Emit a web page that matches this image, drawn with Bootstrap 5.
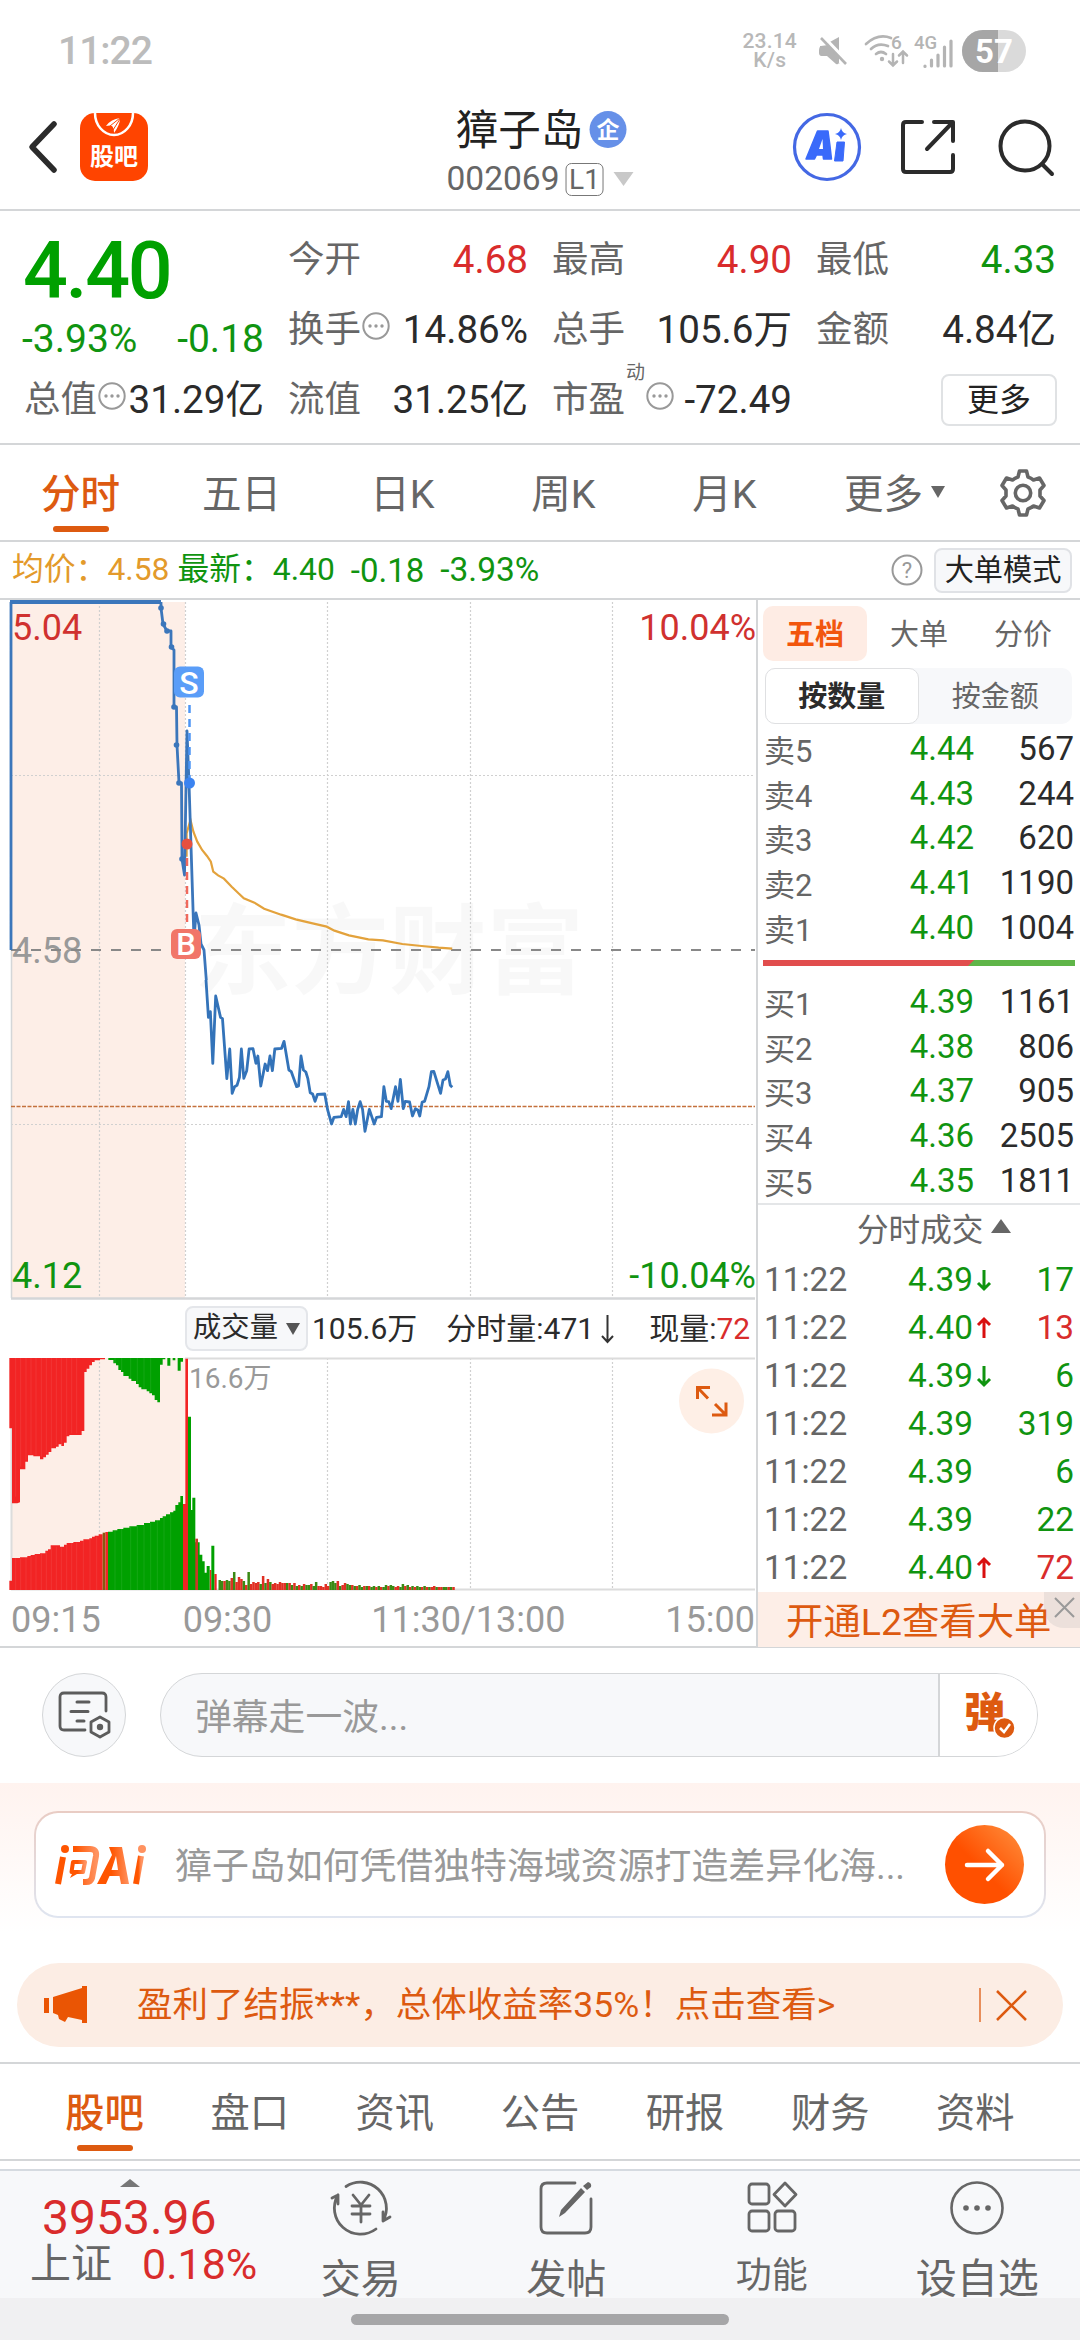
<!DOCTYPE html>
<html lang="zh-CN">
<head>
<meta charset="utf-8">
<meta name="viewport" content="width=device-width, initial-scale=1">
<title>獐子岛 002069</title>
<link href="https://cdn.jsdelivr.net/npm/bootstrap@5.3.0/dist/css/bootstrap.min.css" rel="stylesheet">
<style>
:root{--up:#d92c2c;--down:#109410;--tx:#2b2b2b;--sub:#666;--mute:#999;--org:#dd5a10;--line:#d4d6d8}
body{width:1080px;height:2340px;overflow:hidden;background:#fff;color:var(--tx);font-family:Roboto,"Noto Sans CJK SC",sans-serif;line-height:1;white-space:nowrap}
svg{display:block;flex:none;overflow:visible}
.c-up{color:var(--up)}.c-down{color:var(--down)}.c-sub{color:var(--sub)}.c-org{color:var(--org)}
.hair{border-bottom:2px solid var(--line)}
.statusbar{height:102px;padding:0 54px 0 58px;color:#bcbcbc}
.clock{font-size:39px;font-weight:500;letter-spacing:-1px}
.rate{font-size:21px;line-height:19px;font-weight:500;color:#b8b8b8;letter-spacing:.2px}
.topnav{height:109px;padding:0 25px 0 28px}
.appico{width:68px;height:68px;border-radius:15px;background:#ff4400;margin-left:22px;overflow:hidden}
.stock{font-size:42.5px;line-height:50px;color:#222}
.code{font-size:33.5px;color:var(--sub);line-height:40px}
.lv{border:1.5px solid #777;border-radius:6px;width:38px;height:33px;font-size:28px;line-height:31px;margin:0 10px 0 6px}
.quote{height:234px;padding:14px 24px 0 24px}
.q-main{width:240px}
.q-price{font-size:79px;font-weight:500;color:#00a000;height:92px;padding-top:7px;letter-spacing:-2.3px;margin-left:-1px}
.q-chg{font-size:39px;padding-top:3px;margin-left:-2px}
.q-cells{width:768px;column-gap:24px}
.q-cell{width:240px;height:70px;font-size:36.5px}
.q-cell b{font-weight:400;font-size:38.6px}
.q-dot{margin-left:1px}
.btn-more{width:116px;height:52px;border:2px solid #e0e2e4;border-radius:8px;font-size:32px;line-height:1;color:#222;padding:0;margin-right:-1px}
.ktabs{height:97px;font-size:39.5px;color:var(--sub)}
.ktabs>div{width:161px;height:95px;padding-top:5px}
.tabline{width:56px;height:6px;border-radius:3px;background:var(--org);bottom:8px;left:50%;margin-left:-28px}
.infobar{height:58px;padding:0 8px 0 12px;font-size:31.8px}
.btn-mode{width:138px;height:45px;border:2px solid #e0e2e6;background:#f7f8fa;border-radius:8px;font-size:29.2px;line-height:1;padding:2px 0 0;color:#222}
.mainrow{height:1048px}
.chartcol{width:758px;border-right:2px solid var(--line)}
.volhead{height:57px;padding-left:185px;font-size:30px}
.volsel{width:123px;height:45px;border:2px solid #e4e6ea;background:#f7f8fa;border-radius:8px;font-size:28.3px;margin-right:4px}
.axis{height:55px;font-size:36px;color:var(--mute);padding:3px 1px 0 11px}
.bookcol{width:322px}
.booktabs{height:55px;margin:6px 0 0 5px;font-size:29px;color:var(--sub)}
.booktabs>div{width:104px;border-radius:10px;padding-top:3px}
.booktabs .on{background:#feece4;color:#f2560d;font-weight:700}
.seg{margin:7px 8px 0 7px;height:56px;background:#f7f8fa;border-radius:10px;font-size:29px;color:var(--sub)}
.seg>div{width:154px;border-radius:10px;padding-top:3px}
.seg .on{background:#fff;border:1.5px solid #dfe0e2;color:#2b2b2b;font-weight:700}
.lvl{height:44.8px;padding:0 6px 0 6px;font-size:33px}
.lvl .nm{width:111px;font-size:31px;color:var(--sub);padding-top:6px}
.lvl .pr{width:99px;text-align:right}
.lvl .vo{width:100px;text-align:right}
.bsbar{height:6px;margin:10px 5px 13px 5px;background:linear-gradient(135deg,#e14d4d 0 149px,#5fb548 149.500px)}
.dealhead{height:53px;border-top:2px solid #e4e6e8;font-size:31.6px;color:var(--sub);padding-left:99px}
.deal{height:48px;padding:0 6px;font-size:33.4px}
.deal .tm{width:110px;color:var(--sub)}
.deal .pr{width:99px;text-align:right}
.deal .ar{width:20px;padding-left:3px}
.deal .vo{width:81px;text-align:right}
.l2bar{height:55px;background:#fdeee7;font-size:37.4px;color:var(--org);padding:12px 0 0 28px}
.l2x{width:36px;height:36px;background:#ece0db;border-bottom-left-radius:20px;top:0;right:0}
.danmu{height:135px;padding:25px 42px 0 42px}
.dm-set{width:84px;height:84px;background:#f7f8fa;border:1.5px solid var(--line)}
.dm-box{width:878px;height:84px;border:1.5px solid var(--line);background:#f7f8fa;font-size:36.8px;color:var(--mute)}
.dm-send{width:99px;background:#fff;border-left:2px solid var(--line)}
.aisec{height:180px;padding:28px 34px 0;background:linear-gradient(#fff3ef 0,#fff 150px)}
.aicard{height:107px;border-radius:24px;padding:2px;background:linear-gradient(#e9ccc4,#dfe5f0)}
.aibody{height:103px;border-radius:22px;background:#fff;padding:0 20px 0 18px;font-size:36.9px;color:var(--mute)}
.gobtn{width:79px;height:79px;background:linear-gradient(45deg,#ff5000 45%,#ff9240)}
.tip{height:84px;margin:0 17px;background:#fcede4;border-radius:42px;color:var(--org);font-size:35.5px;padding:0 35px 0 27px}
.btabs{margin-top:15px;height:99px;border-top:2px solid var(--line);border-bottom:2px solid var(--line);font-size:39.3px;color:var(--sub);padding:0 32px}
.btabs>div{width:145.14px;padding-top:6px}
.dock{margin-top:8px;height:129px;border-top:2px solid #d5dae0;background:#f7f8fa;color:var(--sub)}
.dock-idx{width:258px}
.dock-it{width:205.5px;font-size:40px;padding-top:8px}
.gesture{height:42px;background:#f0f0f2;padding-top:16px}
.gesture div{width:378px;height:11px;border-radius:6px;background:#a6a6a8}
</style>
<script src="https://cdn.jsdelivr.net/npm/bootstrap@5.3.0/dist/js/bootstrap.bundle.min.js"></script>
</head>
<body>

<div class="statusbar d-flex align-items-center">
  <div class="clock me-auto">11:22</div>
  <div class="rate text-center">23.14<br>K/s</div>
  <svg width="30" height="30" viewBox="0 0 30 30" class="me-3" style="margin-left:21px"><path d="M2 10h6l14 18V12 28L12 20H4Q2 20 2 17Z" fill="#b4b4b4"/><path d="M10 7l11-6v15Z" fill="#b4b4b4"/><path d="M3 10Q1 11 1 14V17Q1 20 4 20H9L18 28Q21 29 21 26V20L10 9Z" fill="#b4b4b4"/><path d="M5 0L30 26" stroke="#fff" stroke-width="3"/><path d="M3 2L28 28" stroke="#b4b4b4" stroke-width="2.6"/></svg>
  <svg width="46" height="34" viewBox="0 0 46 34"><g fill="none" stroke="#b4b4b4" stroke-width="2.7" stroke-linecap="round"><path d="M2 10Q14-1 27 4M7 15Q14 8 24 12M12 20Q17 16 22 20"/><path d="M29 20V31M25 27.500L29 31.500L33 27.500M39 29V18M35 21.500L39 17.500L43 21.500" stroke-width="2.500"/></g><circle cx="18" cy="25" r="2.200" fill="#b4b4b4"/><text x="27" y="15" font-size="19" font-weight="500" fill="#b4b4b4">6</text></svg>
  <svg width="40" height="36" viewBox="0 0 40 36" class="ms-1"><text x="0" y="16" font-size="18.500" font-weight="500" fill="#b4b4b4">4G</text><g stroke="#b4b4b4" stroke-width="3.200" stroke-linecap="round"><path d="M11 33v.5M17.500 27V33M24 22V33M30.500 14V33M37 8V33"/></g></svg>
  <svg width="64" height="42" viewBox="0 0 64 42" style="margin-left:8px"><defs><clipPath id="bat"><rect width="64" height="42" rx="21"/></clipPath></defs><g clip-path="url(#bat)"><path d="M0 0H64V42H0Z" fill="#dadada"/><path d="M0 0H36V42H0Z" fill="#a6a6a6"/></g><text x="32" y="32.500" text-anchor="middle" font-size="33" font-weight="700" fill="#fff">57</text></svg>
</div>

<div class="topnav hair d-flex align-items-center position-relative">
  <svg width="30" height="54" viewBox="0 0 30 54" style="margin-top:-20px"><path d="M26 5L4 28L26 51" fill="none" stroke="#2b2b2b" stroke-width="5.500" stroke-linecap="round" stroke-linejoin="round"/></svg>
  <div class="appico" style="margin-top:-18px"><svg width="68" height="68" viewBox="0 0 68 68"><path d="M15 0a19 22 0 0 0 38 0" fill="none" stroke="#fff" stroke-width="2.500"/><path d="M26 13Q31 6 40 5Q40 12 34 20Q34 15 32 13Q30 12 26 13Z" fill="#fff"/><path d="M30 13L40 5M33 17L40 6" stroke="#ff4400" stroke-width="1"/><text x="34" y="52" text-anchor="middle" font-size="24" font-weight="700" fill="#fff">股吧</text></svg></div>
  <div class="position-absolute start-50 top-0 translate-middle-x d-flex flex-column align-items-center">
    <div class="d-flex align-items-center" style="padding:4px 0 0 2px"><span class="stock">獐子岛</span>
      <svg width="37" height="37" viewBox="0 0 37 37" style="margin:-4px 0 0 6px"><circle cx="18.500" cy="18.500" r="18.500" fill="#6690e8"/><text x="18.500" y="27" text-anchor="middle" font-size="23" font-weight="700" fill="#fff">企</text></svg></div>
    <div class="code d-flex align-items-center" style="margin-top:3px">002069<span class="lv text-center">L1</span><svg width="20" height="14"><path d="M0 0H20L10 14Z" fill="#c8c8c8"/></svg></div>
  </div>
  <svg class="ms-auto" style="margin-top:-18px" width="68" height="68" viewBox="0 0 68 68"><circle cx="34" cy="34" r="32.500" fill="none" stroke="#4468e4" stroke-width="3.200"/><path d="M24.500 18H35Q37 32 38.500 46H30.500L30 42H23.500L21.500 46H13Z" fill="#3a6afa" stroke="#3a6afa" stroke-width="1.500" stroke-linejoin="round"/><path d="M26 36L29.500 26L30 36Z" fill="#fff"/><path d="M44 29H51.500L50 48H41.500Z" fill="#3a6afa" stroke="#3a6afa" stroke-linejoin="round"/><path d="M48 15Q49 20 54 21Q49 22 48 27Q47 22 42 21Q47 20 48 15Z" fill="#3a6afa"/></svg>
  <svg style="margin:-18px 0 0 39px" width="56" height="56" viewBox="0 0 56 56"><g fill="none" stroke="#2b2b2b" stroke-width="4" stroke-linecap="round" stroke-linejoin="round"><path d="M22 3H6Q3 3 3 6V50Q3 53 6 53H50Q53 53 53 50V36M34 3H53V22M52 4L27 30"/></g></svg>
  <svg style="margin:-16px 0 0 41px" width="58" height="58" viewBox="0 0 58 58"><g fill="none" stroke="#2b2b2b" stroke-width="4" stroke-linecap="round"><circle cx="28" cy="27" r="24.500"/><path d="M45 45L55 55"/></g></svg>
</div>

<div class="quote hair">
  <div class="d-flex gap-4">
    <div class="q-main">
      <div class="q-price">4.40</div>
      <div class="q-chg d-flex justify-content-between c-down"><span>-3.93%</span><span>-0.18</span></div>
    </div>
    <div class="q-cells d-flex flex-wrap">
      <div class="q-cell d-flex align-items-center justify-content-between"><span class="c-sub">今开</span><b class="c-up">4.68</b></div>
      <div class="q-cell d-flex align-items-center justify-content-between"><span class="c-sub">最高</span><b class="c-up">4.90</b></div>
      <div class="q-cell d-flex align-items-center justify-content-between"><span class="c-sub">最低</span><b class="c-down">4.33</b></div>
      <div class="q-cell d-flex align-items-center justify-content-between"><span class="c-sub d-flex">换手<svg class="q-dot" width="28" height="28" viewBox="0 0 28 28"><use href="#more"/></svg></span><b>14.86%</b></div>
      <div class="q-cell d-flex align-items-center justify-content-between"><span class="c-sub">总手</span><b>105.6万</b></div>
      <div class="q-cell d-flex align-items-center justify-content-between"><span class="c-sub">金额</span><b>4.84亿</b></div>
    </div>
  </div>
  <div class="d-flex gap-4">
    <div class="q-cell d-flex align-items-center justify-content-between"><span class="c-sub d-flex">总值<svg class="q-dot" width="28" height="28" viewBox="0 0 28 28"><use href="#more"/></svg></span><b>31.29亿</b></div>
    <div class="q-cell d-flex align-items-center justify-content-between"><span class="c-sub">流值</span><b>31.25亿</b></div>
    <div class="q-cell d-flex align-items-center justify-content-between"><span class="c-sub d-flex position-relative">市盈<span class="position-absolute" style="font-size:19px;left:74px;top:-19px">动</span><svg style="margin-left:21px" width="28" height="28" viewBox="0 0 28 28"><g id="more"><circle cx="14" cy="14" r="12.700" fill="none" stroke="#999" stroke-width="2"/><g fill="#999"><circle cx="8" cy="14" r="1.700"/><circle cx="14" cy="14" r="1.700"/><circle cx="20" cy="14" r="1.700"/></g></g></svg></span><b>-72.49</b></div>
    <div class="q-cell d-flex align-items-center justify-content-end"><button class="btn btn-more">更多</button></div>
  </div>
</div>

<div class="ktabs hair d-flex align-items-center">
  <div class="d-flex align-items-center justify-content-center position-relative c-org fw-medium">分时<span class="tabline position-absolute"></span></div>
  <div class="d-flex align-items-center justify-content-center">五日</div>
  <div class="d-flex align-items-center justify-content-center">日K</div>
  <div class="d-flex align-items-center justify-content-center">周K</div>
  <div class="d-flex align-items-center justify-content-center">月K</div>
  <div class="d-flex align-items-center" style="padding-left:39px;width:193px">更多<svg width="14" height="12" style="margin:-6px 0 0 8px"><path d="M0 0H14L7 12Z" fill="#666"/></svg></div>
  <svg width="50" height="50" viewBox="0 0 50 50"><g fill="none" stroke="#666" stroke-width="3.600" stroke-linejoin="round"><path d="M21.500 3H28.500L30 9Q33 10 35.500 12L41.500 10L46 17.500L42 22V28L46 32.500L41.500 40L35.500 38Q33 40 30 41L28.500 47H21.500L20 41Q17 40 14.500 38L8.500 40L4 32.500L8 28V22L4 17.500L8.500 10L14.500 12Q17 10 20 9Z"/><circle cx="25" cy="25" r="7.700"/></g></svg>
</div>

<div class="infobar hair d-flex align-items-center">
  <span style="color:#e39a2b">均价：4.58</span><span class="c-down" style="margin-left:8px">最新：4.40</span><span class="c-down" style="margin-left:16px;font-size:33px">-0.18</span><span class="c-down" style="margin-left:16px;font-size:33.500px">-3.93%</span>
  <svg class="ms-auto me-2" width="32" height="32" viewBox="0 0 32 32"><circle cx="16" cy="16" r="14.500" fill="none" stroke="#999" stroke-width="2"/><text x="16" y="24" text-anchor="middle" font-size="22" fill="#999">?</text></svg>
  <button class="btn btn-mode" style="margin-left:3px">大单模式</button>
</div>

<div class="mainrow hair d-flex">
  <div class="chartcol">
    <svg width="756" height="700" viewBox="0 0 756 700">
      <path d="M11 2H185V699H11Z" fill="#fdeee7"/>
      <text x="194" y="386" font-size="97.500" font-weight="700" fill="#000" fill-opacity=".027" font-family="Noto Sans CJK SC">东方财富</text>
      <g stroke="#d0d0d0" stroke-width="1.200" stroke-dasharray="2 2" fill="none"><path d="M99.500 2V698M185.500 2V698M327.500 2V698M470.500 2V698M612.500 2V698M11 175.500H755M11 524.500H755"/></g>
      <path d="M11.500 350V698" stroke="#d4d6d8" stroke-width="1.500"/><path d="M11 698.500H755" stroke="#d4d6d8" stroke-width="2.500"/>
      <text x="12" y="363" font-size="36" fill="#999">4.58</text>
      <path d="M11 350H755" stroke="#888" stroke-width="2" stroke-dasharray="10 10"/>
      <path d="M11 506.500H755" stroke="#c4713c" stroke-width="1.600" stroke-dasharray="4 1.500"/>
      <g transform="translate(0 -10) scale(.4847 .33333)"><path vector-effect="non-scaling-stroke" fill="none" stroke="#e3a23c" stroke-width="2.200" d="M385 800L385 730L393 690L399 725L407 755L417 780L427 798L435 815L440 845L450 856L462 866L478 890L492 910L503 925L525 938L545 956L580 974L610 988L645 1000L674 1010L690 1022L720 1036L760 1048L790 1051L830 1062L870 1068L905 1073L933 1076"/></g>
      <g fill="none" stroke="#3b76bb" stroke-linejoin="round"><path stroke-width="4" d="M10 2H161"/><path stroke-width="2.800" d="M11 350V2M161 2V8L163 24L167 31H171V47L174 50V107H176.500L177 145L179 183H181.500L182 259L184.500 275L187 131L189 183L194 340L196 313L199 325L201 344L204 350L206.300 380"/></g>
      <g fill="#3b76bb"><circle cx="161" cy="8" r="2.800"/><circle cx="163.500" cy="24" r="2.800"/><circle cx="167" cy="31" r="2.800"/><circle cx="171.500" cy="47" r="2.800"/><circle cx="174" cy="107" r="2.800"/><circle cx="176.500" cy="145" r="2.800"/><circle cx="179" cy="183" r="2.800"/><circle cx="182" cy="259" r="2.800"/></g>
      <g transform="translate(0 300) scale(.4847 .33333)"><path vector-effect="non-scaling-stroke" fill="none" stroke="#3373b9" stroke-width="2.800" stroke-linejoin="round" d="M425 240L430 352L434 335L439 490L445 288L455 352L459 356L468 536L474 447L479 580L484 560L489 556L494 532L498 447L503 535L509 512L514 447L522 446L528 490L532 468L538 558L547 492L552 512L557 468L562 512L567 447L581 445L586 424L596 510L601 515L612 560L616 558L621 468L626 510L631 516L635 535L640 578L645 582L650 604L655 583L670 582L676 630L684 672L689 652L704 650L709 628L714 650L719 605L723 672L728 628L733 672L738 628L743 605L748 628L753 694L762 628L772 672L777 652L787 650L792 560L797 604L802 605L807 626L816 560L821 604L826 538L832 626L836 604L845 606L851 648L857 626L862 630L866 648L871 606L876 604L885 560L890 515L895 514L909 580L914 540L919 537L924 515L929 556L933 562"/></g>
      <path d="M189.500 105V184" stroke="#4d95f5" stroke-width="2.500" stroke-dasharray="8 6"/><circle cx="189.500" cy="183" r="5.500" fill="#3b83f0"/>
      <path d="M187 258V328" stroke="#f0695c" stroke-width="2.500" stroke-dasharray="8 6"/><circle cx="187" cy="244" r="5.500" fill="#e8503f"/>
      <rect x="174" y="66.500" width="30" height="31" rx="6" fill="#5a9df8"/><text x="189" y="93.500" text-anchor="middle" font-size="32" font-weight="500" fill="#fff">S</text>
      <rect x="171" y="329" width="30" height="30" rx="6" fill="#f17669"/><text x="186" y="355" text-anchor="middle" font-size="31" font-weight="500" fill="#fff">B</text>
      <g font-size="36"><text x="12" y="40" fill="#d0312f">5.04</text><text x="756" y="40" text-anchor="end" fill="#d0312f">10.04%</text><text x="12" y="688" fill="#109410">4.12</text><text x="756" y="688" text-anchor="end" fill="#109410">-10.04%</text></g>
    </svg>
    <div class="volhead d-flex align-items-center">
      <div class="volsel d-flex align-items-center justify-content-center">成交量<svg width="14" height="12" style="margin-left:8px"><path d="M0 0H14L7 12Z" fill="#555"/></svg></div>
      <span>105.6万</span><span class="d-flex" style="margin-left:29px">分时量:471<svg width="17" height="30" viewBox="0 0 17 30" style="margin-left:5px"><path d="M8.500 1V28M3 22L8.500 28L14 22" fill="none" stroke="#333" stroke-width="2"/></svg></span><span style="margin-left:33px">现量:<span class="c-up">72</span></span>
    </div>
    <svg width="756" height="234" viewBox="0 0 756 234" id="vol">
      <path d="M11 1H185V233H11Z" fill="#fdeee7"/>
      <g stroke="#d0d0d0" stroke-width="1.200" stroke-dasharray="2 2"><path d="M99.500 1V232M327.500 1V232M470.500 1V232M612.500 1V232"/></g>
      <path d="M11.500 1V232M185 1.500H755M11 232.500H755" stroke="#dcdcdc" stroke-width="2" fill="none"/>
      <g transform="translate(0 -7) scale(.33333)">
        <path fill="#f22424" d="M28 24V235H36V460H52L60 457V358H76V335H84V316H100V319H120V328H130V322H138V314H146V306H154V295H168V290H176V283H184V288H192V278H200V259H208V255H245V243H253V66H260V56H268V46H276V36H284V31H300V28H315V24Z"/>
        <path fill="#00a000" d="M325 24V30H340V40H348V46H355V60H363V66H370V78H386V86H394V93H408V102H416V112H424V118H440V124H448V130H456V136H464V150H472V157H480V44H488V28H496V24ZM502 24H511V47H502ZM518 24H526V31H518ZM533 24H542V62H533ZM542 24H549V35H542Z"/>
        <path fill="#f22424" d="M28 720V692H36V624H60V622H82V618H92V615H104V612H120V610H136V602H144V598H152V586H180V590H192V584H200V579H220V576H240V572H250V568H268V565H276V560H284V557H296V553H308V720ZM316 720V546H324V720ZM549 720V462H556V26H564V720ZM629 720V660H634V720ZM643 720V672H650V720Z"/>
        <path fill="#8a5a10" d="M308 548H316V720H308Z"/>
        <path fill="#00a000" d="M324 720V545H338V541H352V537H370V533H388V529H410V525H432V519H450V515H465V511H480V504H488V499H498V493H510V487H520V482H526V465H535V457H541V438H549V720ZM564 720V200H573V480H577V443H586V577H599V614H607V634H614V668H620V648H629V720ZM634 720V587H643V720Z"/>
        <path fill="#c83a26" d="M586 566H594V720H586Z"/>
        <g stroke="#fff" stroke-opacity=".13" stroke-width="2"><path d="M47 24V440M62 24V350M78 24V330M93 24V312M108 24V315M124 24V320M139 24V310M154 24V294M169 24V285M184 24V284M200 24V256M215 24V250M230 24V250M47 625V720M62 625V720M78 620V720M93 620V720M108 614V720M124 612V720M139 605V720M154 590V720M169 590V720M184 592V720M200 580V720M215 578V720M230 578V720M250 570V720M270 566V720M290 560V720M345 541V720M365 537V720M392 530V720M412 526V720M432 522V720M452 518V720M472 510V720M492 502V720M512 490V720M345 24V40M365 24V60M392 24V84M412 24V98M432 24V116M452 24V125"/></g>
      </g>
      <g id="bars"></g>
      <text x="189" y="31" font-size="28" fill="#999">16.6万</text>
      <circle cx="711.500" cy="44" r="32.500" fill="#feefe6"/>
      <g fill="none" stroke="#dd5a10" stroke-width="3"><path d="M697.500 42V30.500H710M698 31L708 41.500M726 45.500V58H712M725 57L715 47"/></g>
    </svg>
    <div class="axis d-flex align-items-center"><span>09:15</span><span style="margin-left:82px">09:30</span><span style="margin-left:99px">11:30/13:00</span><span class="ms-auto">15:00</span></div>
  </div>

  <div class="bookcol">
    <div class="booktabs d-flex">
      <div class="on d-flex align-items-center justify-content-center">五档</div><div class="d-flex align-items-center justify-content-center">大单</div><div class="d-flex align-items-center justify-content-center">分价</div>
    </div>
    <div class="seg d-flex"><div class="on d-flex align-items-center justify-content-center">按数量</div><div class="d-flex align-items-center justify-content-center">按金额</div></div>
    <div style="height:2px"></div>
    <div class="lvl d-flex align-items-center"><span class="nm">卖5</span><span class="pr c-down">4.44</span><span class="vo">567</span></div>
    <div class="lvl d-flex align-items-center"><span class="nm">卖4</span><span class="pr c-down">4.43</span><span class="vo">244</span></div>
    <div class="lvl d-flex align-items-center"><span class="nm">卖3</span><span class="pr c-down">4.42</span><span class="vo">620</span></div>
    <div class="lvl d-flex align-items-center"><span class="nm">卖2</span><span class="pr c-down">4.41</span><span class="vo">1190</span></div>
    <div class="lvl d-flex align-items-center"><span class="nm">卖1</span><span class="pr c-down">4.40</span><span class="vo">1004</span></div>
    <div class="bsbar"></div>
    <div class="lvl d-flex align-items-center"><span class="nm">买1</span><span class="pr c-down">4.39</span><span class="vo">1161</span></div>
    <div class="lvl d-flex align-items-center"><span class="nm">买2</span><span class="pr c-down">4.38</span><span class="vo">806</span></div>
    <div class="lvl d-flex align-items-center"><span class="nm">买3</span><span class="pr c-down">4.37</span><span class="vo">905</span></div>
    <div class="lvl d-flex align-items-center"><span class="nm">买4</span><span class="pr c-down">4.36</span><span class="vo">2505</span></div>
    <div class="lvl d-flex align-items-center"><span class="nm">买5</span><span class="pr c-down">4.35</span><span class="vo">1811</span></div>
    <div class="dealhead d-flex align-items-center">分时成交<svg width="20" height="14" style="margin:-8px 0 0 8px"><path d="M0 14H20L10 0Z" fill="#666"/></svg></div>
    <div class="deal d-flex align-items-center"><span class="tm">11:22</span><span class="pr c-down">4.39</span><span class="ar"><svg width="16" height="22" viewBox="0 0 16 22"><path d="M8 1V20M2 14L8 20L14 14" fill="none" stroke="#109410" stroke-width="3"/></svg></span><span class="vo c-down">17</span></div>
    <div class="deal d-flex align-items-center"><span class="tm">11:22</span><span class="pr c-down">4.40</span><span class="ar"><svg width="16" height="22" viewBox="0 0 16 22"><path d="M8 21V2M2 8L8 2L14 8" fill="none" stroke="#d90f0f" stroke-width="3"/></svg></span><span class="vo c-up">13</span></div>
    <div class="deal d-flex align-items-center"><span class="tm">11:22</span><span class="pr c-down">4.39</span><span class="ar"><svg width="16" height="22" viewBox="0 0 16 22"><path d="M8 1V20M2 14L8 20L14 14" fill="none" stroke="#109410" stroke-width="3"/></svg></span><span class="vo c-down">6</span></div>
    <div class="deal d-flex align-items-center"><span class="tm">11:22</span><span class="pr c-down">4.39</span><span class="ar"></span><span class="vo c-down">319</span></div>
    <div class="deal d-flex align-items-center"><span class="tm">11:22</span><span class="pr c-down">4.39</span><span class="ar"></span><span class="vo c-down">6</span></div>
    <div class="deal d-flex align-items-center"><span class="tm">11:22</span><span class="pr c-down">4.39</span><span class="ar"></span><span class="vo c-down">22</span></div>
    <div class="deal d-flex align-items-center"><span class="tm">11:22</span><span class="pr c-down">4.40</span><span class="ar"><svg width="16" height="22" viewBox="0 0 16 22"><path d="M8 21V2M2 8L8 2L14 8" fill="none" stroke="#d90f0f" stroke-width="3"/></svg></span><span class="vo c-up">72</span></div>
    <div class="l2bar position-relative"><div class="l2x position-absolute"><svg width="36" height="36"><path d="M11 6L30 25M30 6L11 25" stroke="#999" stroke-width="2"/></svg></div><span class="position-relative">开通L2查看大单</span></div>
  </div>
</div>

<div class="danmu d-flex justify-content-between">
  <div class="dm-set rounded-circle d-flex align-items-center justify-content-center"><svg width="54" height="50" viewBox="0 0 54 50" style="margin-left:2px"><g fill="none" stroke="#5c5c5c" stroke-width="2.800" stroke-linecap="round"><path d="M48 21V7Q48 3 44 3H6Q2 3 2 7V36Q2 40 6 40H27"/><path d="M19 12H31M13 21.500H30M19 31H26" stroke-width="3"/><path d="M42 27L51 32V42L42 47L33 42V32Z" stroke-linejoin="round"/></g><circle cx="42" cy="37" r="3.200" fill="#5c5c5c"/></svg></div>
  <div class="dm-box rounded-pill overflow-hidden d-flex align-items-stretch">
    <div class="flex-grow-1 d-flex align-items-center" style="padding:6px 0 0 34px">弹幕走一波...</div>
    <div class="dm-send d-flex align-items-center" style="padding-left:24px"><svg width="54" height="50" viewBox="0 0 54 50"><text x="0" y="37" font-size="41" font-weight="900" font-family="Noto Sans CJK SC" fill="#dd5a10">弹</text><circle cx="40.500" cy="38" r="10.500" fill="#dd5a10" stroke="#fff" stroke-width="1.500"/><path d="M36 38L40 42L46 34" fill="none" stroke="#fff" stroke-width="2.500"/></svg></div>
  </div>
</div>

<div class="aisec">
  <div class="aicard"><div class="aibody d-flex align-items-center">
    <svg width="96" height="44" viewBox="0 0 96 44"><defs><linearGradient id="ag"><stop offset=".45" stop-color="#ff5500"/><stop offset="1" stop-color="#ff9260"/></linearGradient></defs><g fill="none" stroke="url(#ag)" stroke-width="6" stroke-linejoin="round"><path d="M9 14L4 41M19 6H36Q43 6 42 13L38 35Q37 39 32 39H29"/><path d="M19 19H31L29 29H17.500Z" stroke-width="4"/><path d="M87 13L82 41"/></g><path d="M55 4H68L75 41H67L65.500 33H55.500L52 41H43L58 12ZM62 13L57.500 27H64Z" fill="url(#ag)" fill-rule="evenodd"/><circle cx="11" cy="6" r="4" fill="#ff5500"/><circle cx="88" cy="6" r="4" fill="#ff9260"/><path d="M18 31L16 35L23 31" fill="#ff5500"/></svg>
    <span style="margin-left:25px;padding-top:6px">獐子岛如何凭借独特海域资源打造差异化海...</span>
    <div class="gobtn rounded-circle ms-auto d-flex align-items-center justify-content-center"><svg width="42" height="34" viewBox="0 0 42 34"><path d="M3 17H38M24 3L38 17L24 31" fill="none" stroke="#fff" stroke-width="4.500" stroke-linecap="round" stroke-linejoin="round"/></svg></div>
  </div></div>
</div>

<div class="tip d-flex align-items-center">
  <svg width="44" height="38" viewBox="0 0 44 38"><path d="M0 12H5V27H0ZM9 11L38 2V0H43V37H38V34L24 31L21 36L15 33L14 29L9 27Z" fill="#ea5504"/></svg>
  <span style="margin-left:49px;padding-top:2px">盈利了结振***，总体收益率35%！点击查看&gt;</span>
  <svg class="ms-auto" width="50" height="38" viewBox="0 0 50 38"><path d="M2 2V36" stroke="#dd5a10" stroke-width="1.300"/><path d="M19 5L48 34M48 5L19 34" stroke="#dd5a10" stroke-width="2.500"/></svg>
</div>

<div class="btabs d-flex">
  <div class="d-flex align-items-center justify-content-center position-relative c-org fw-medium">股吧<span class="tabline position-absolute"></span></div>
  <div class="d-flex align-items-center justify-content-center">盘口</div>
  <div class="d-flex align-items-center justify-content-center">资讯</div>
  <div class="d-flex align-items-center justify-content-center">公告</div>
  <div class="d-flex align-items-center justify-content-center">研报</div>
  <div class="d-flex align-items-center justify-content-center">财务</div>
  <div class="d-flex align-items-center justify-content-center">资料</div>
</div>

<div class="dock d-flex">
  <div class="dock-idx d-flex flex-column">
    <svg width="20" height="8" style="margin:8px 0 0 120px"><path d="M0 8H20L10 0Z" fill="#777"/></svg>
    <div class="c-up" style="font-size:48px;padding:7px 0 0 42px">3953.96</div>
    <div class="d-flex align-items-center" style="font-size:41px;padding-left:30px;margin-top:1px">上证<span class="c-up" style="margin-left:30px;font-size:43px">0.18%</span></div>
  </div>
  <div class="dock-it d-flex flex-column align-items-center">
    <svg width="62" height="58" viewBox="0 0 62 58"><g fill="none" stroke="#666" stroke-width="2.800" stroke-linecap="round" stroke-linejoin="round"><path d="M16 7.500A26 26 0 0 1 53 42L60 38M53 42V33M46 50A26 26 0 0 1 8 16L2 19M8 16V25"/><path d="M23 16L31 26L39 16M22 27H40M22 35H40M31 27V43"/></g></svg>
    <div style="margin-top:23px">交易</div></div>
  <div class="dock-it d-flex flex-column align-items-center">
    <svg width="56" height="58" viewBox="0 0 56 58"><g fill="none" stroke="#666" stroke-width="2.800" stroke-linecap="round"><path d="M37 4H9Q3 4 3 10V48Q3 54 9 54H47Q53 54 53 48V20"/></g><path d="M21 38L23 31L43 9L47 13L27 34ZM45 7L50 3Q54 4 53 8L49 11Z" fill="#666"/></svg>
    <div style="margin-top:23px">发帖</div></div>
  <div class="dock-it d-flex flex-column align-items-center">
    <svg width="54" height="58" viewBox="0 0 54 58"><g fill="none" stroke="#666" stroke-width="2.800" stroke-linejoin="round"><rect x="4" y="5" width="20" height="20" rx="3"/><rect x="4" y="32" width="20" height="20" rx="3"/><rect x="30" y="32" width="20" height="20" rx="3"/><path d="M40 4L51 15.500L40 27L29 15.500Z"/></g></svg>
    <div style="margin-top:21px;font-size:36px">功能</div></div>
  <div class="dock-it d-flex flex-column align-items-center">
    <svg width="58" height="58" viewBox="0 0 58 58"><circle cx="29" cy="29" r="25.500" fill="none" stroke="#666" stroke-width="2.600"/><g fill="#666"><circle cx="18" cy="29" r="2.800"/><circle cx="29" cy="29" r="2.800"/><circle cx="40" cy="29" r="2.800"/></g></svg>
    <div style="margin-top:22px;font-size:41px">设自选</div></div>
</div>
<div class="gesture d-flex justify-content-center"><div></div></div>

<script>
// minute bars after the opening spike: height in px, r = rise, g = fall
const minutes="10g 9g 9r 10g 9g 12r 18g 8r 13r 11r 9g 5r 18g 6r 8r 7r 8r 6g 14r 7g 11r 8g 6r 7r 6r 8r 7r 7r 7g 7r 5g 7r 4g 5r 4g 6r 5g 5g 6r 4g 8g 4r 4r 3r 6r 4r 8g 9g 7g 9r 4g 5r 7r 6g 5g 5r 4g 4r 5g 3g 4r 4g 4r 3g 4g 3r 4g 3r 3g 5g 4r 5g 4g 3r 4r 3g 6g 4r 5g 3r 4g 3r 4g 3g 3r 4g 3r 3g 3r 4r 3g 3r 3r 3g 3g 3r 3g 3r".split(" ");
document.getElementById("bars").innerHTML=minutes.map((m,i)=>`<rect x="${218.5+i*2.41}" y="${233-parseInt(m)}" width="2.5" height="${parseInt(m)}" fill="${m.endsWith("r")?"#e03024":"#3a8a14"}"/>`).join("");
</script>
</body>
</html>
